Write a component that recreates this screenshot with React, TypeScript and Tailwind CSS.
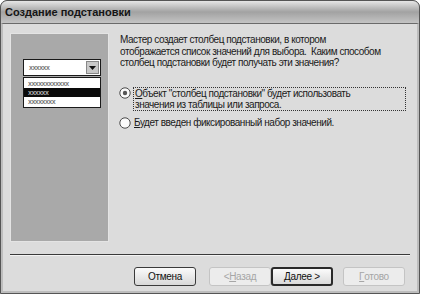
import React from "react";

const F = { fontFamily: '"Liberation Sans", Arial, sans-serif' };

function Radio({ checked }: { checked?: boolean }) {
  return (
    <svg width="12" height="12" viewBox="0 0 12 12" className="shrink-0">
      <circle cx="6" cy="6" r="5.2" fill="#fafafa" stroke="#4a4a4a" strokeWidth="1" />
      {checked && <circle cx="6" cy="6" r="2.2" fill="#555" />}
    </svg>
  );
}

function Btn({ children, disabled, def }: { children: React.ReactNode; disabled?: boolean; def?: boolean }) {
  return (
    <div
      className={
        "w-[62px] h-[19px] flex items-center justify-center text-[10px] tracking-[-0.3px] rounded-[3px] " +
        (disabled
          ? "border border-[#c4c4c4] bg-[#ececec] text-[#a6a6a6]"
          : def
          ? "border-2 border-[#2a2a2a] bg-gradient-to-b from-[#fbfbfb] to-[#dadada] text-[#111]"
          : "border border-[#3a3a3a] bg-gradient-to-b from-[#fbfbfb] to-[#d8d8d8] text-[#111]")
      }
      style={F}
    >
      {children}
    </div>
  );
}

export default function App() {
  return (
    <div className="w-[421px] h-[295px] bg-white overflow-hidden" style={F}>
      <div className="w-[420px] h-[294px] flex flex-col rounded-t-[7px] border border-[#555] bg-[#5a5a5a] overflow-hidden">
        {/* title */}
        <div className="h-[22px] shrink-0 flex items-center pl-[4px] bg-gradient-to-b from-[#e6e6e6] via-[#a2a2a2] to-[#c4c4c4]">
          <span className="text-[11px] font-bold text-[#151515]" style={F}>Создание подстановки</span>
        </div>
        {/* body */}
        <div className="flex-1 flex flex-col bg-[#dcdcdc] border-t border-[#6a6a6a] border-l-2 border-l-[#bdbdbd] border-r-2 border-r-[#bdbdbd] border-b-2 border-b-[#bdbdbd]">
          <div className="flex flex-1 pt-[9px] pl-[7px] gap-[10px]">
            {/* left panel */}
            <div className="w-[99px] h-[209px] shrink-0 bg-[#a9a9a9] border border-[#e4e4e4] flex flex-col items-start pl-[12px] pt-[25px]">
              <div className="w-[78px] h-[17px] bg-white border border-[#1a1a1a] flex items-center justify-between pl-[5px] pr-[1px]">
                <span className="text-[7px] tracking-[-0.5px] text-[#777] font-bold leading-none">xxxxxx</span>
                <div className="w-[13px] h-[13px] bg-[#c9c9c9] border border-[#888] flex items-center justify-center">
                  <svg width="7" height="4" viewBox="0 0 7 4"><path d="M0 0h7L3.5 4z" fill="#111" /></svg>
                </div>
              </div>
              <div className="w-[78px] mt-[1px] bg-white border border-[#1a1a1a] flex flex-col py-[1px]">
                <div className="h-[9px] flex items-center pl-[4px] text-[7px] tracking-[-0.5px] text-[#777] font-bold leading-none">xxxxxxxxxxxx</div>
                <div className="h-[9px] flex items-center pl-[4px] text-[7px] tracking-[-0.5px] text-[#aaa] font-bold leading-none bg-[#0a0a0a]">xxxxxx</div>
                <div className="h-[9px] flex items-center pl-[4px] text-[7px] tracking-[-0.5px] text-[#777] font-bold leading-none">xxxxxxxx</div>
              </div>
            </div>
            {/* right content */}
            <div className="w-[290px] flex flex-col pt-[1px]">
              <p className="pl-[1px] text-[10px] tracking-[-0.45px] leading-[11.5px] text-[#1a1a1a]">
                Мастер создает столбец подстановки, в котором<br />
                отображается список значений для выбора.&nbsp; Каким способом<br />
                столбец подстановки будет получать эти значения?
              </p>
              <div className="mt-[18px] flex items-start gap-[2px]">
                <Radio checked />
                <div className="border border-dotted border-[#333] px-[1px] text-[10px] tracking-[-0.45px] leading-[11px] text-[#1a1a1a] w-[273px] h-[24px]">
                  <span className="underline">О</span>бъект "столбец подстановки" будет использовать<br />значения из таблицы или запроса.
                </div>
              </div>
              <div className="mt-[6px] flex items-center gap-[3px]">
                <Radio />
                <span className="text-[10px] tracking-[-0.45px] leading-[12px] text-[#1a1a1a]"><span className="underline">Б</span>удет введен фиксированный набор значений.</span>
              </div>
            </div>
          </div>
          {/* separator */}
          <div className="mx-[7px] h-[2px] border-t border-[#3a3a3a] border-b border-b-[#f4f4f4]" />
          <div className="h-[35px] flex items-start pt-[11px] pl-[131px]">
            <Btn>Отмена</Btn>
            <div className="ml-[13px]"><Btn disabled>&lt; <span className="underline">Н</span>азад</Btn></div>
            <Btn def><span className="underline">Д</span>алее &gt;</Btn>
            <div className="ml-[10px]"><Btn disabled><span className="underline">Г</span>отово</Btn></div>
          </div>
        </div>
      </div>
    </div>
  );
}
